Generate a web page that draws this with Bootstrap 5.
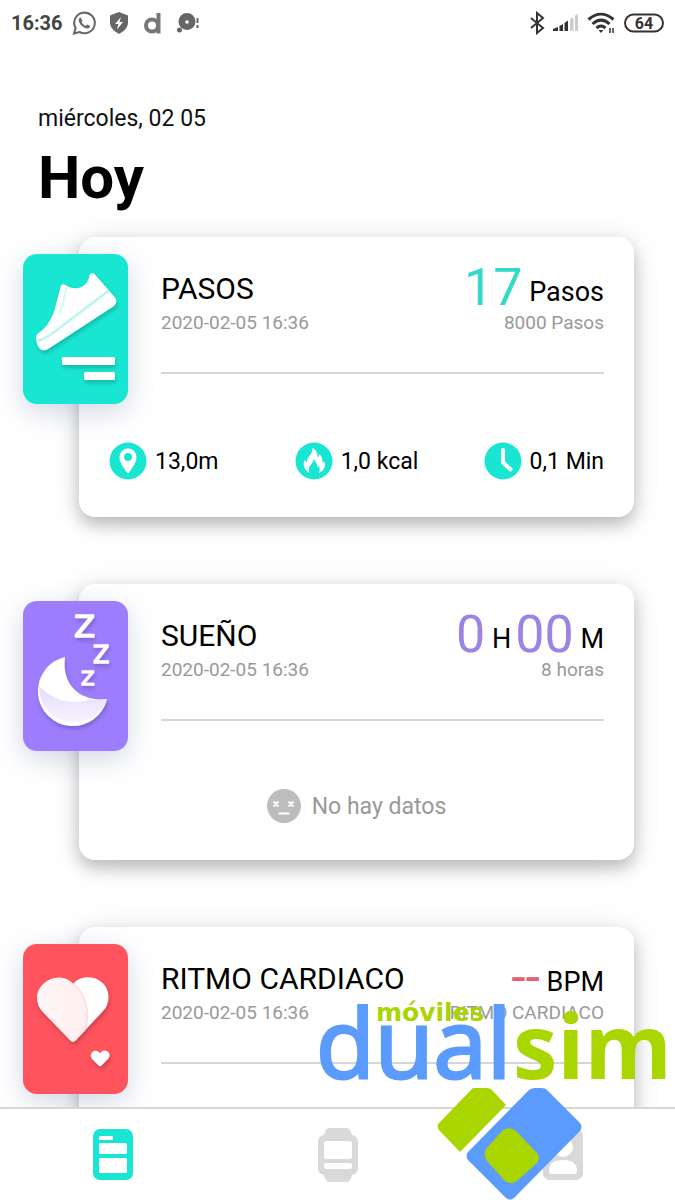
<!DOCTYPE html>
<html lang="es">
<head>
<meta charset="utf-8">
<meta name="viewport" content="width=device-width, initial-scale=1">
<title>Hoy</title>
<link href="https://cdn.jsdelivr.net/npm/bootstrap@5.3.0/dist/css/bootstrap.min.css" rel="stylesheet">
<style>
  :root { --teal: #19e6d2; --violet: #9d7dfe; --coral: #ff535d; }
  body { font-family: Roboto, sans-serif; color: #000; background: #fff; }
  .status-bar { height: 45px; padding: 0 11px 0 11px; color: #444; font-size: 20px; font-weight: 700; }
  .status-icons { gap: 8px; }
  .page-head { padding: 60px 38px 24px; }
  .date-line { font-size: 23px; line-height: 28px; color: #111; }
  .page-title { font-size: 60px; line-height: 70px; font-weight: 700; margin: 10px 0 0; }
  .feed { gap: 67px; }
  .metric-card { margin: 0 41px 0 79px; border-radius: 16px; background: #fff;
    box-shadow: 0 8px 16px rgba(0,0,0,.2), 0 4px 30px rgba(0,0,0,.13); padding: 29px 30px 35px; }
  .tile { top: 17px; left: -56px; width: 105px; height: 150px; border-radius: 14px;
    box-shadow: 0 8px 28px rgba(90,110,160,.28); }
  .tile-teal { background: var(--teal); }
  .tile-violet { background: var(--violet); }
  .tile-coral { background: var(--coral); }
  .card-head { margin-left: 52px; padding-bottom: 36px; border-bottom: 2px solid #d6d6d6; }
  .metric-name { font-size: 30px; line-height: 42px; font-weight: 400; margin: 0; }
  .sub { font-size: 19px; line-height: 26px; color: #999; }
  .figure-row { font-size: 27px; line-height: 35px; }
  .big { font-size: 52px; line-height: 44px; vertical-align: -4px; }
  .big-teal { color: #35d9c8; }
  .big-violet { color: #9b84e4; }
  .big-coral { color: #e2626f; }
  .card-foot { padding-top: 68px; font-size: 23px; line-height: 40px; }
  .no-data { color: #999; line-height: 36px; gap: 11px; }
  .tab-bar { height: 93px; border-top: 2px solid #d6d6d6; background: #fff; }
  .watermark { right: 0; bottom: 0; width: 360px; pointer-events: none; }
</style>
</head>
<body>
<div class="vh-100 d-flex flex-column overflow-hidden position-relative">
  <header class="status-bar d-flex align-items-center justify-content-between flex-shrink-0">
    <div class="status-icons d-flex align-items-center">
      <span>16:36</span>
      <svg width="132" height="26" viewBox="0 0 132 26" fill="#666" aria-hidden="true">
        <path d="M3 23.500l1.600-5.400A10.300 10.300 0 1 1 8.600 22z" fill="none" stroke="#666" stroke-width="2"/>
        <path d="M9.500 7.500c-1 0-2 1.500-1.800 3 .5 3.800 5 7.800 8.600 7.900 1.500 0 3-1.200 2.700-2.500l-2.900-1.500-1.500 1.500c-1.800-.7-3.200-2-4-3.800l1-1.200z"/>
        <path d="M48 2l9 3.400v7.200c0 5-3.800 8.600-9 11.400-5.200-2.800-9-6.400-9-11.400V5.400z"/>
        <path d="M50 7l-6 7h3.400L46 19.500l6-7.500h-3.500z" fill="#fff"/>
        <circle cx="81" cy="15.500" r="6" fill="none" stroke="#777" stroke-width="4"/>
        <path d="M87.500 3v20.500" stroke="#777" stroke-width="4"/>
        <circle cx="116" cy="11.500" r="8.500"/><circle cx="116" cy="12" r="1.800" fill="#fff"/><circle cx="108.500" cy="20" r="2.500"/>
        <path d="M126.500 8v5M126.500 15v3" stroke="#666" stroke-width="2"/>
      </svg>
    </div>
    <svg width="136" height="24" viewBox="0 0 136 24" aria-label="Bluetooth, señal, wifi, batería 64" role="img">
      <path d="M3 7l12 10-6 5V2l6 5L3 17" fill="none" stroke="#333" stroke-width="2"/>
      <path d="M25 20h5v-4l-5 2zM31.500 20h3.500v-7l-3.500 2zM36.500 20H40V9.500L36.500 12z" fill="#333"/>
      <path d="M42 20h3.500V6L42 8zM47 20h3V3l-3 1.500z" fill="#ccc"/>
      <g fill="none" stroke="#333" stroke-width="3"><path d="M60.500 8.500c8-7 17-7 25 0M64.500 13c5.500-5 11.500-5 17 0M68.500 17c3-2.600 6-2.600 9 0"/></g>
      <path d="M70.500 19l2.500 3 2.500-3z" fill="#333"/>
      <path d="M82 16v6M85 16v6" stroke="#fff" stroke-width="4"/>
      <path d="M82 17v5M85 17v5" stroke="#333" stroke-width="1.500"/>
      <rect x="97" y="3.500" width="38" height="17" rx="8.500" fill="none" stroke="#333" stroke-width="2"/>
      <text x="116" y="17.500" text-anchor="middle" font-family="Roboto, sans-serif" font-weight="700" font-size="16" fill="#333">64</text>
    </svg>
  </header>

  <main class="flex-grow-1 overflow-hidden">
    <div class="page-head">
      <div class="date-line">miércoles, 02 05</div>
      <h1 class="page-title">Hoy</h1>
    </div>

    <div class="feed d-flex flex-column">
      <article class="metric-card position-relative">
        <div class="tile tile-teal position-absolute">
          <svg width="105" height="150" viewBox="0 0 105 150" aria-hidden="true">
            <defs><filter id="soft" x="-20%" y="-20%" width="150%" height="150%"><feDropShadow dx="1" dy="3" stdDeviation="2" flood-color="#000" flood-opacity=".2"/></filter></defs>
            <g filter="url(#soft)" fill="#fff">
              <path d="M38 31.500Q39 29.500 41.500 30.500C46 33 48 34.500 53 34.300C60 34 65.500 29 66.500 21.500Q68 17.500 71.500 20L92 43.500Q95 48 91 52L25 95C19 98.500 14 95 13 84Q12.500 81.500 15 79.500C25 73 30 62 32 54z"/>
              <rect x="39" y="103" width="53" height="8" rx="1.500"/>
              <rect x="61" y="118" width="31" height="8" rx="1.500"/>
            </g>
            <path d="M14 87C25 85 36 74 45 67.500L86 36.500" fill="none" stroke="#b9f6ee" stroke-width="2.500"/>
            <path d="M44 33C40 42 42 50 36 59" fill="none" stroke="#d5faf5" stroke-width="2"/>
          </svg>
        </div>
        <div class="card-head d-flex justify-content-between align-items-end">
          <div><h2 class="metric-name">PASOS</h2><div class="sub">2020-02-05 16:36</div></div>
          <div class="text-end">
            <div class="figure-row"><span class="big big-teal">17</span> Pasos</div>
            <div class="sub">8000 Pasos</div>
          </div>
        </div>
        <div class="card-foot d-flex">
          <div class="col d-flex gap-2">
            <svg width="38" height="38" viewBox="0 0 38 38" aria-hidden="true"><circle cx="19" cy="19" r="18.500" fill="#19e6d2"/><path d="M19 32C15 26 10.500 21 10.500 15a8.500 8.500 0 0 1 17 0c0 6-4.500 11-8.500 17z" fill="#fff"/><circle cx="19" cy="15" r="4" fill="#19e6d2"/></svg>
            <span>13,0m</span>
          </div>
          <div class="col-auto d-flex gap-2">
            <svg width="38" height="38" viewBox="0 0 38 38" aria-hidden="true"><circle cx="19" cy="19" r="18.500" fill="#19e6d2"/><path d="M14.500 31C9 28 7 22 10 18c.7 1.500 1.200 2 2 2.500C11.500 14 18 13 17.500 6c4 2 5.500 6 5 9.500 1.200-.7 1.700-1.800 1.700-3.500C28 15 27 18 28 21.500c.5-.7.8-1.500 1-2.500 2.500 5-.5 10-5 12 1.500-3 .5-5-.5-7.500l-1.500 2c.5-4-1.500-6-3.500-8.500.2 4-4 6-4.500 9.500-.2 1.500 0 3 .5 4.500z" fill="#fff"/></svg>
            <span>1,0 kcal</span>
          </div>
          <div class="col d-flex gap-2 justify-content-end">
            <svg width="38" height="38" viewBox="0 0 38 38" aria-hidden="true"><circle cx="19" cy="19" r="18.500" fill="#19e6d2"/><path d="M19 8v12.500l7.500 7" fill="none" stroke="#fff" stroke-width="4" stroke-linecap="round" stroke-linejoin="round"/></svg>
            <span>0,1 Min</span>
          </div>
        </div>
      </article>

      <article class="metric-card position-relative">
        <div class="tile tile-violet position-absolute">
          <svg width="105" height="150" viewBox="0 0 105 150" aria-hidden="true">
            <defs><linearGradient id="moonLow" x1="0" y1="0" x2="0" y2="1"><stop offset="0" stop-color="#e4dafa"/><stop offset="1" stop-color="#f8f4ff"/></linearGradient></defs>
            <g filter="url(#soft)">
              <g fill="#fff" stroke="#fff" stroke-width="1.500" stroke-linejoin="round" font-family="DejaVu Sans, sans-serif">
                <text x="51" y="36" font-size="31">Z</text>
                <text x="70" y="62" font-size="24">Z</text>
                <text x="58" y="84" font-size="20">Z</text>
              </g>
              <path d="M42 56A35 35 0 1 0 84 98C62 101 38 88 42 56z" fill="#fff"/>
            </g>
            <path d="M16 85C28 97 44 105 67 98.500Q76 99.500 84 98A35 35 0 0 1 16 85z" fill="url(#moonLow)"/>
          </svg>
        </div>
        <div class="card-head d-flex justify-content-between align-items-end">
          <div><h2 class="metric-name">SUEÑO</h2><div class="sub">2020-02-05 16:36</div></div>
          <div class="text-end">
            <div class="figure-row"><span class="big big-violet">0</span> H<span class="big big-violet ms-1">00</span> M</div>
            <div class="sub">8 horas</div>
          </div>
        </div>
        <div class="card-foot">
          <div class="no-data d-flex justify-content-center">
            <svg width="34" height="34" viewBox="0 0 34 34" aria-hidden="true"><circle cx="17" cy="17" r="17" fill="#bdbdbd"/><path d="M6.500 12.500l5 5M11.500 12.500l-5 5M21.500 12.500l5 5M26.500 12.500l-5 5" stroke="#fff" stroke-width="2"/><path d="M11.500 24.500h11" stroke="#fff" stroke-width="2"/></svg>
            <span>No hay datos</span>
          </div>
        </div>
      </article>

      <article class="metric-card position-relative">
        <div class="tile tile-coral position-absolute">
          <svg width="105" height="150" viewBox="0 0 105 150" aria-hidden="true">
            <defs><linearGradient id="lobe" x1="0" x2="1"><stop offset="0" stop-color="#fff6f7"/><stop offset="1" stop-color="#ffeef0"/></linearGradient></defs>
            <g filter="url(#soft)" fill="#fff">
              <path d="M50.300 40C56 31.500 71 31 79 38.500C88 46 87 60 80 67L53 96Q50 99.500 47 96L20 68C12 60 12 47 21 39.500C29 32 43 31.500 50.300 40z"/>
              <path d="M77 109.500C79 105.500 84 105.500 86 109C87.500 112 85.500 114.500 84 116L78.500 121.500Q77 123 75.500 121.500L70 116C67.500 113.500 67 111 69 108.500C71 106 75 106 77 109.500z"/>
            </g>
            <path d="M50.300 40C62 49 69 70 61 87.500L53 96Q50 99.500 47 96L20 68C12 60 12 47 21 39.500C29 32 43 31.500 50.300 40z" fill="url(#lobe)"/>
            <path d="M50.300 40C62 49 69 70 61 87.500" fill="none" stroke="#ffd9dd" stroke-width="1.500"/>
          </svg>
        </div>
        <div class="card-head d-flex justify-content-between align-items-end">
          <div><h2 class="metric-name">RITMO CARDIACO</h2><div class="sub">2020-02-05 16:36</div></div>
          <div class="text-end">
            <div class="figure-row"><span class="big big-coral">--</span> BPM</div>
            <div class="sub">RITMO CARDIACO</div>
          </div>
        </div>
        <div class="card-foot"><div class="no-data"></div></div>
      </article>
    </div>
  </main>

  <nav class="tab-bar row g-0 flex-shrink-0 align-items-center position-relative" aria-label="Principal">
    <a class="col d-flex justify-content-center" href="#hoy" aria-label="Hoy" aria-current="page">
      <svg width="40" height="52" viewBox="0 0 40 52"><rect width="40" height="51" rx="7" fill="#19e6d2"/><g fill="#fff"><rect x="6" y="7" width="14" height="4" rx="1"/><rect x="6" y="14" width="28" height="11" rx="1.500"/><rect x="6" y="29" width="28" height="15" rx="1.500"/></g></svg>
    </a>
    <a class="col d-flex justify-content-center" href="#dispositivo" aria-label="Dispositivo">
      <svg width="40" height="54" viewBox="0 0 40 54"><path d="M12 0h16q4 0 5 4l1 3q6 1 6 7v26q0 6-6 7l-1 3q-1 4-5 4H12q-4 0-5-4l-1-3q-6-1-6-7V14Q0 8 6 7l1-3q1-4 5-4z" fill="#d9d9d9"/><rect x="6" y="13" width="28" height="18" rx="2" fill="#fff"/><rect x="6" y="35" width="28" height="6" rx="2" fill="#fff"/></svg>
    </a>
    <a class="col d-flex justify-content-center" href="#perfil" aria-label="Perfil">
      <svg width="40" height="52" viewBox="0 0 40 52"><rect width="40" height="51" rx="7" fill="#d9d9d9"/><circle cx="20" cy="18" r="10" fill="#fff"/><path d="M6 42q0-11 14-11t14 11q0 3-3 3H9q-3 0-3-3z" fill="#fff"/></svg>
    </a>
  </nav>

  <svg class="watermark position-absolute" viewBox="315 950 360 250" role="img" aria-label="móviles dualsim">
    <g font-family="Open Sans, sans-serif">
      <text x="316" y="1078" fill="#5b9bfd" stroke="#5b9bfd" stroke-width="3" font-size="96">dual</text>
      <text x="513" y="1079" fill="#a9d500" font-weight="700" font-size="89">sim</text>
    </g>
    <text x="376" y="1021" fill="#a9d500" font-family="DejaVu Sans, sans-serif" font-weight="700" font-size="25">móviles</text>
    <path d="M474 1088h13q3 0 5 2l14 15-45 46q-1 1-2 0l-20-21q-3-4 0-7l32-33q1-2 3-2z" fill="#a9d500"/>
    <path d="M535 1088h7q3 0 5 2l33 33q3 4 0 8l-66 67q-4 3-8 0l-38-38q-3-4 0-8l61-62q3-2 6-2z" fill="#5b9bfd"/>
    <path d="M503 1130q7-4 13 1l21 22q4 5 0 10l-20 18q-6 4-12 0l-18-20q-4-6-1-12z" fill="#a9d500"/>
  </svg>
</div>
<script src="https://cdn.jsdelivr.net/npm/bootstrap@5.3.0/dist/js/bootstrap.bundle.min.js"></script>
</body>
</html>
